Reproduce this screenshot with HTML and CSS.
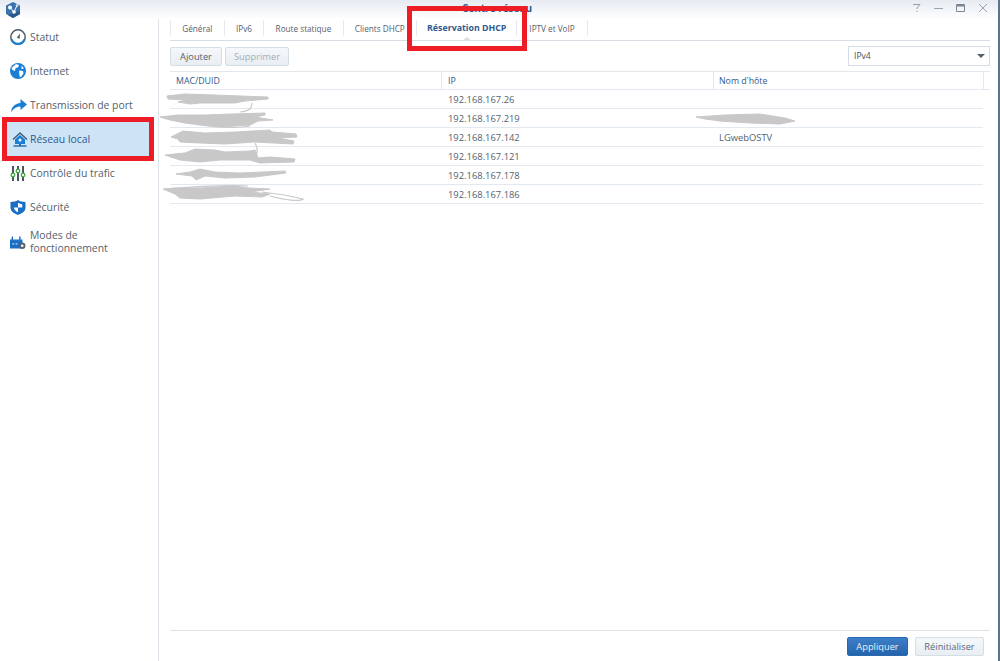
FILE: index.html
```html
<!DOCTYPE html>
<html lang="fr">

<head>
    <meta charset="UTF-8">
    <title>Centre réseau</title>
    <link rel="stylesheet" href="styles.css">
</head>

<body>
    <div class="window">
        <header class="titlebar">
            <svg class="app-logo" width="16" height="16" viewBox="0 0 16 16">
                <path d="M8 0l7 3.500v8.500L8 16l-7-4V3.500z" fill="#3b72ae" />
                <path d="M3 13l5 3 7-4V9z" fill="#2a568c" />
                <path d="M5 5.500L9 10l3-6.500" stroke="#fff" fill="none" />
                <circle cx="5" cy="5.500" r="2" fill="#fff" />
                <circle cx="12" cy="3.500" r="1.300" fill="#dbe8f4" />
                <circle cx="9" cy="10" r="1.800" fill="#fff" />
            </svg>
            <span class="window-title">Centre réseau</span>
            <div class="window-btns">
                <svg width="12" height="12" viewBox="0 0 12 12">
                    <path d="M2 2.500h7l-3 3.500v1M6 8.500v1.500" stroke="#9aa3ad" fill="none" />
                </svg>
                <svg width="12" height="12" viewBox="0 0 12 12">
                    <path d="M1 6.500h9" stroke="#9aa3ad" />
                </svg>
                <svg width="12" height="12" viewBox="0 0 12 12">
                    <path d="M1.500 2.500h8v7h-8z" stroke="#7c8794" fill="none" />
                    <path d="M1.500 3.500h8" stroke="#7c8794" stroke-width="2" />
                </svg>
                <svg width="12" height="12" viewBox="0 0 12 12">
                    <path d="M2 2l8 8M10 2l-8 8" stroke="#9aa3ad" />
                </svg>
            </div>
        </header>

        <div class="main">
            <nav class="sidebar">
                <div class="nav-item">
                    <svg class="nav-icon" width="16" height="16" viewBox="0 0 16 16">
                        <circle cx="8" cy="8" r="7.200" fill="#fff" stroke="#4c5a68" stroke-width="1.500" />
                        <path d="M1.500 10.500a7 7 0 0 0 13 0" fill="none" stroke="#1f7fd0" stroke-width="2.200" />
                        <path d="M6.800 9l3-4.500 0 5z" fill="#4c5a68" />
                    </svg>
                    <span>Statut</span>
                </div>
                <div class="nav-item">
                    <svg class="nav-icon" width="16" height="16" viewBox="0 0 16 16">
                        <circle cx="8" cy="8" r="8" fill="#1a7fd4" />
                        <path d="M6 1l3 1-1 2.500-2.500.5-.5 3L2.500 7 1.500 5zM9 7.500l4 .5.500 2.500-2.500 3.500-1.500-.5zM11.500 2.500l2.500 3-2.500.5z" fill="#fff" />
                    </svg>
                    <span>Internet</span>
                </div>
                <div class="nav-item">
                    <svg class="nav-icon nav-arrow" width="16" height="13" viewBox="0 0 16 13">
                        <path d="M0 13C.5 8 4 4.500 9.500 4V0L16 5.500 9.500 11V7.500C6 7.500 3 9 0 13z" fill="#1a7fd4" />
                    </svg>
                    <span>Transmission de port</span>
                </div>
                <div class="nav-item active">
                    <svg class="nav-icon nav-house" width="15" height="15" viewBox="0 0 15 15">
                        <path d="M7.500 0L0 7l1 1 6.500-6 6.500 6 1-1z" fill="#3f5f80" />
                        <path d="M7.500 3L2.500 7.500V12h10V7.500z" fill="#1a7fd4" />
                        <circle cx="7.500" cy="8" r="1.500" fill="#fff" />
                        <path d="M1 14h13" stroke="#2a6ea8" stroke-width="1.500" />
                        <path d="M7.500 12v2" stroke="#2a6ea8" stroke-width="2" />
                    </svg>
                    <span>Réseau local</span>
                </div>
                <div class="nav-item">
                    <svg class="nav-icon" width="16" height="15" viewBox="0 0 16 15">
                        <path d="M3 0v15M8 0v15M13 0v15" stroke="#4a5560" stroke-width="2" />
                        <circle cx="3" cy="9" r="1.800" fill="#fff" stroke="#3ca83c" stroke-width="1.300" />
                        <circle cx="8" cy="5" r="1.800" fill="#fff" stroke="#3ca83c" stroke-width="1.300" />
                        <circle cx="13" cy="9" r="1.800" fill="#fff" stroke="#3ca83c" stroke-width="1.300" />
                    </svg>
                    <span>Contrôle du trafic</span>
                </div>
                <div class="nav-item">
                    <svg class="nav-icon" width="15" height="15" viewBox="0 0 16 16">
                        <path d="M8 0c2 1.500 5 2 8 2v6c0 4-3 6-8 8-5-2-8-4-8-8V2c3 0 6-.5 8-2z" fill="#1a6fc4" />
                        <path d="M8 3v5H3.500c.5 2.500 2 4 4.500 5V8h4.500V4.500C11 4.500 9.500 4 8 3z" fill="#fff" />
                    </svg>
                    <span>Sécurité</span>
                </div>
                <div class="nav-item two-lines">
                    <svg class="nav-icon" width="17" height="15" viewBox="0 0 17 15">
                        <path d="M0.500 5h12v8h-12zM2.500 1v4M10.500 1v4" fill="#1a6fc4" stroke="#1a6fc4" stroke-width="1.500" />
                        <path d="M2.500 9h2M6 9h2" stroke="#fff" />
                        <circle cx="13" cy="11" r="2.400" fill="#fff" stroke="#55606b" stroke-width="2" />
                    </svg>
                    <span>Modes de<br>fonctionnement</span>
                </div>
            </nav>

            <section class="content">
                <div class="tabs">
                    <div class="tab">Général</div>
                    <div class="tab">IPv6</div>
                    <div class="tab">Route statique</div>
                    <div class="tab">Clients DHCP</div>
                    <div class="tab tab-on">Réservation DHCP</div>
                    <div class="tab">IPTV et VoIP</div>
                </div>

                <div class="toolbar">
                    <button class="btn btn-add">Ajouter</button>
                    <button class="btn btn-off">Supprimer</button>
                    <div class="select">
                        <span>IPv4</span>
                        <i class="caret"></i>
                    </div>
                </div>

                <div class="grid">
                    <div class="row head">
                        <div class="cell col-mac">MAC/DUID</div>
                        <div class="cell col-ip">IP</div>
                        <div class="cell col-host">Nom d'hôte</div>
                        <div class="cell col-end"></div>
                    </div>
                    <div class="row">
                        <div class="cell col-mac"></div>
                        <div class="cell col-ip">192.168.167.26</div>
                        <div class="cell col-host"></div>
                    </div>
                    <div class="row">
                        <div class="cell col-mac"></div>
                        <div class="cell col-ip">192.168.167.219</div>
                        <div class="cell col-host"></div>
                    </div>
                    <div class="row">
                        <div class="cell col-mac"></div>
                        <div class="cell col-ip">192.168.167.142</div>
                        <div class="cell col-host">LGwebOSTV</div>
                    </div>
                    <div class="row">
                        <div class="cell col-mac"></div>
                        <div class="cell col-ip">192.168.167.121</div>
                        <div class="cell col-host"></div>
                    </div>
                    <div class="row">
                        <div class="cell col-mac"></div>
                        <div class="cell col-ip">192.168.167.178</div>
                        <div class="cell col-host"></div>
                    </div>
                    <div class="row">
                        <div class="cell col-mac"></div>
                        <div class="cell col-ip">192.168.167.186</div>
                        <div class="cell col-host"></div>
                    </div>
                </div>

                <div class="footer">
                    <button class="btn btn-blue">Appliquer</button>
                    <button class="btn btn-grey">Réinitialiser</button>
                </div>
            </section>
        </div>
    </div>

    <!-- annotations on top of the screenshot -->
    <div class="red-box box-nav"></div>
    <div class="red-box box-tab"></div>

    <svg class="scribbles" width="1000" height="661" viewBox="0 0 1000 661">
        <g fill="#c8c8c8" stroke="#c8c8c8" stroke-linejoin="round">
            <path d="M167 96L185 94 215 95 240 96 268 97 268 99 245 101 235 103 200 103 190 104 178 102 186 100 168 99z" />
            <path d="M160 117L178 115 205 115 232 114 265 113 265 115 255 117 273 120 258 121 250 125 220 127 200 125 185 123 170 120z" />
            <path d="M171 137L183 131 205 133 235 132 270 130 272 132 296 134 297 137 278 138 294 141 293 144 255 142 225 144 200 143 180 142 178 139z" />
            <path d="M165 155L185 153 195 149 215 150 225 152 250 151 255 150 258 158 270 157 295 159 294 162 260 163 250 160 220 160 200 162 180 160z" />
            <path d="M176 174L190 172 200 169 215 172 240 173 285 171 286 173 255 177 225 178 205 176 196 180 192 176z" />
            <path d="M163 189L180 188 200 188 235 186 248 188 270 189 250 192 270 194 262 197 235 196 200 199 180 198 175 194z" />
            <path d="M696 117L725 115 760 114 785 118 795 121 780 124 750 123 720 121 705 119z" />
        </g>
        <g fill="none" stroke="#c8c8c8" stroke-width="1.200">
            <path d="M252 103C252 108 250 111 240 112" />
            <path d="M195 123C210 128 240 128 250 126" />
            <path d="M255 143C258 148 258 153 255 158" />
            <path d="M165 189C190 187 230 185 248 186" />
            <path d="M262 192C280 194 295 197 303 199 300 202 285 200 270 196" />
        </g>
    </svg>
</body>

</html>
```

FILE: styles.css
```css
html,
body {
    margin: 0;
    padding: 0;
    height: 100%;
}

body {
    font-family: "Open Sans", "Liberation Sans", Arial, sans-serif;
    font-size: 11px;
    color: #44505c;
    background-color: #fff;
    overflow: hidden;
}

.window {
    display: flex;
    flex-direction: column;
    height: 661px;
    width: 998px;
    border-right: 2px solid #5d7487;
}

.titlebar {
    display: grid;
    grid-template-columns: 1fr auto 1fr;
    align-items: start;
    height: 19px;
    flex-shrink: 0;
    box-sizing: border-box;
    padding: 2px 9px 0 5px;
    background: linear-gradient(#e6ebf2, #fff);
}

.window-title {
    font-weight: bold;
    color: #2f5a8e;
    font-size: 10px;
    line-height: 12px;
}

.window-btns {
    display: flex;
    gap: 10px;
    justify-content: flex-end;
}

.main {
    display: flex;
    flex: 1;
    min-height: 0;
}

.sidebar {
    width: 147px;
    flex-shrink: 0;
    border-right: 1px solid #dfe4ea;
    padding: 1px 8px 0 3px;
}

.nav-item {
    display: flex;
    align-items: center;
    height: 34px;
    padding-left: 7px;
    font-size: 10.400px;
    color: #55616d;
}

.nav-icon {
    width: 16px;
    flex-shrink: 0;
    margin-right: 4px;
}

.nav-arrow {
    margin-left: 1px;
    margin-right: 3px;
}

.nav-house {
    margin-left: 2px;
    margin-right: 2px;
}

.nav-item.active {
    background-color: #cde3f6;
    color: #2f5a8e;
}

.two-lines {
    margin-top: 1px;
    line-height: 13px;
}

.content {
    flex: 1;
    display: flex;
    flex-direction: column;
    padding: 0 8px 0 11px;
    min-width: 0;
}

.tabs {
    display: flex;
    align-items: flex-start;
    height: 21px;
    flex-shrink: 0;
    border-bottom: 1px solid #d9dee4;
}

.tab {
    display: flex;
    align-items: center;
    height: 16px;
    margin-top: 1px;
    padding: 0 11.300px;
    font-size: 8.200px;
    color: #55616d;
    border-left: 1px solid #e6eaef;
    white-space: nowrap;
}

.tab:last-child {
    padding: 0 12px;
    border-right: 1px solid #e6eaef;
}

.tab-on {
    font-size: 8.800px;
    padding: 0 10px;
    font-weight: bold;
    color: #2f5a8e;
    position: relative;
}

.tab-on::after {
    content: "";
    position: absolute;
    left: 50%;
    bottom: -5px;
    margin-left: -5px;
    border-left: 5px solid transparent;
    border-right: 5px solid transparent;
    border-bottom: 4px solid #d9dee4;
}

.toolbar {
    display: flex;
    align-items: center;
    gap: 3px;
    height: 30px;
    flex-shrink: 0;
}

.btn {
    height: 19px;
    padding: 0;
    width: 64px;
    font-family: inherit;
    font-size: 9.300px;
    color: #55616d;
    background: linear-gradient(#f5f8fb, #e9eef3);
    border: 1px solid #d5dde5;
    border-radius: 2px;
}

.btn-add {
    width: 52px;
}

.btn-off {
    color: #a6aeb6;
}

.select {
    display: flex;
    align-items: center;
    justify-content: space-between;
    box-sizing: border-box;
    width: 142px;
    height: 20px;
    margin-left: auto;
    padding: 0 4px 0 5px;
    border: 1px solid #d5dee8;
    font-size: 8.600px;
}

.caret {
    border-left: 4px solid transparent;
    border-right: 4px solid transparent;
    border-top: 4px solid #55616d;
}

.grid {
    flex: 1;
    border-top: 1px solid #e4e8ed;
}

.row {
    display: flex;
    width: 813px;
    height: 18px;
    border-bottom: 1px solid #e3e9f0;
}

.row.head {
    width: auto;
    height: 17px;
}

.cell {
    display: flex;
    align-items: center;
    box-sizing: border-box;
    padding-left: 6px;
    font-size: 9.400px;
    color: #55616d;
}

.col-mac {
    width: 272px;
}

.col-ip {
    width: 272px;
}

.col-host {
    flex: 1;
    padding-left: 5px;
}

.col-end {
    flex: none;
    width: 6px;
    padding: 0;
}

.head .cell {
    color: #2f5a8e;
    font-size: 8.800px;
    border-right: 1px solid #e3e9f0;
}

.head .col-end {
    border-right: none;
}

.footer {
    display: flex;
    justify-content: flex-end;
    align-items: center;
    gap: 7px;
    height: 30px;
    flex-shrink: 0;
    padding-right: 6px;
    border-top: 1px solid #dfe3e8;
}

.btn-blue {
    width: 61px;
    color: #e8f1fa;
    background: linear-gradient(#3d7fc8, #2464ac);
    border-color: #2a69b0;
}

.btn-grey {
    width: 69px;
    color: #5f6974;
}

.red-box {
    position: absolute;
    box-sizing: border-box;
    border: 5px solid #ee1c25;
}

.box-nav {
    left: 2px;
    top: 117px;
    width: 152px;
    height: 44px;
}

.box-tab {
    left: 407px;
    top: 6px;
    width: 120px;
    height: 45px;
}

.scribbles {
    position: absolute;
    left: 0;
    top: 0;
    pointer-events: none;
}
```
